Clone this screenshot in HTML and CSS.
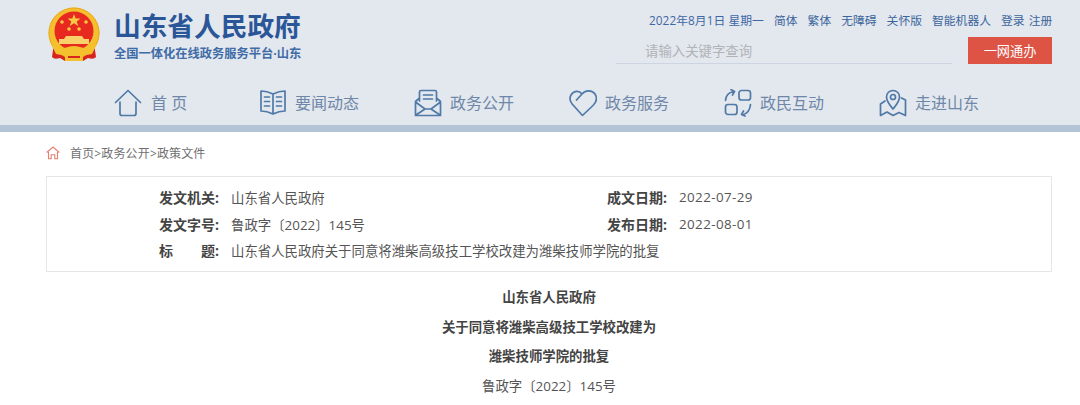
FILE: index.html
```html
<!DOCTYPE html>
<html lang="zh-CN">
<head>
<meta charset="utf-8">
<title>山东省人民政府</title>
<link rel="stylesheet" href="styles.css">
</head>
<body>
<header class="header">
  <div class="top">
    <div class="brand">
      <svg class="emblem" viewBox="0 0 52 56">
        <path d="M6 36 L4 50 Q6 53 12 51 L17 54 L35 54 L40 51 Q46 53 48 50 L46 36Z" fill="#d9231d"/>
        <circle cx="26" cy="26" r="25.500" fill="#f5c02e"/>
        <circle cx="26" cy="26" r="25" fill="none" stroke="#e8aa20" stroke-width="1"/>
        <circle cx="26" cy="24" r="19.500" fill="#e8291f"/>
        <polygon points="26,7 27.700,11.500 32.500,11.500 28.700,14.500 30.200,19 26,16.300 21.800,19 23.300,14.500 19.500,11.500 24.300,11.500" fill="#f6c945"/>
        <circle cx="14" cy="15" r="1.800" fill="#f6c945"/>
        <circle cx="38" cy="15" r="1.800" fill="#f6c945"/>
        <circle cx="21" cy="22" r="1.800" fill="#f6c945"/>
        <circle cx="31" cy="22" r="1.800" fill="#f6c945"/>
        <path d="M18 29 H34 L36 32 H16Z M11 32 H41 V37 H11Z" fill="#f8d16a"/>
        <path d="M3 37 Q12 43 20 40 Q26 38 32 40 Q40 43 49 37 L44 47 Q36 49 32 45 Q26 43 20 45 Q16 49 8 47Z" fill="#f5c02e"/>
        <path d="M17 47 H35 V54 H17Z" fill="#f5c02e"/>
        <path d="M20 49 H32 V51 H20Z" fill="#d9231d"/>
      </svg>
      <div class="brand-text">
        <div class="brand-title">山东省人民政府</div>
        <div class="brand-sub">全国一体化在线政务服务平台·山东</div>
      </div>
    </div>
    <div class="tools">
      <div class="links">
        <span class="date">2022年8月1日 星期一</span>
        <span>简体</span><span>繁体</span><span>无障碍</span><span>关怀版</span><span>智能机器人</span>
        <span class="auth">登录 注册</span>
      </div>
      <div class="search-row">
        <div class="search">请输入关键字查询</div>
        <div class="go">一网通办</div>
      </div>
    </div>
  </div>
  <nav class="nav">
    <a class="nav-item nav-first">
      <svg class="ico" viewBox="0 0 28 28"><path d="M1.500 13.500 L14 1.500 L26.500 13.500 M6 13 V24.500 Q6 26.500 8 26.500 H20 Q22 26.500 22 24.500 V13"/></svg>
      <span>首 页</span>
    </a>
    <a class="nav-item">
      <svg class="ico" viewBox="0 0 28 28"><path d="M14 5 Q8 2 2 2 V22 Q8 22 14 25 Q20 22 26 22 V2 Q20 2 14 5Z M14 5 V25 M5.500 8 H10.500 M5.500 12.500 H10.500 M5.500 17 H10.500 M17.500 8 H22.500 M17.500 12.500 H22.500 M17.500 17 H22.500"/></svg>
      <span>要闻动态</span>
    </a>
    <a class="nav-item">
      <svg class="ico" viewBox="0 0 28 28"><path d="M5.500 12 V3 Q5.500 1.500 7 1.500 H21 Q22.500 1.500 22.500 3 V12 M9.500 6 H18.500 M9.500 10 H18.500 M5.500 9 L1.500 12.500 V26.500 H26.500 V12.500 L22.500 9 M1.500 13 L11 20 H17 L26.500 13 M2 26 L11 20 M26 26 L17 20"/></svg>
      <span>政务公开</span>
    </a>
    <a class="nav-item">
      <svg class="ico" viewBox="0 0 28 28"><path d="M5 17 C1 13 0 9.500 2 6 C4.500 1.500 10 1 13 5 L7.500 11 M13 5 C16 1 23 0.500 26 5 C28.500 9 27 13.500 24 16.500 L14 26 Q13.500 26.500 13 26 L5 17"/></svg>
      <span>政务服务</span>
    </a>
    <a class="nav-item">
      <svg class="ico" viewBox="0 0 28 28"><rect x="15" y="1.500" width="11.500" height="9.500" rx="2.500"/><rect x="1.500" y="15.500" width="11.500" height="10" rx="2.500"/><path d="M1.500 11.500 Q2 4 9.500 2.500 M7 0.500 L10.500 2.500 L8.500 6 M26.500 15.500 Q26 23.500 18.500 26 M21 27 L17.500 25.500 L19.500 22"/></svg>
      <span>政民互动</span>
    </a>
    <a class="nav-item">
      <svg class="ico" viewBox="0 0 28 28"><path d="M14 20 C10 15 7.500 12.500 7.500 8 C7.500 4 10.500 1.500 14 1.500 C17.500 1.500 20.500 4 20.500 8 C20.500 12.500 18 15 14 20Z"/><circle cx="14" cy="8" r="2.500"/><path d="M6 12 L1.500 15 V26.500 L8 23 L14 26.500 L20 23.500 L26.500 26.500 V11 L22.500 9"/></svg>
      <span>走进山东</span>
    </a>
  </nav>
</header>
<div class="strip"></div>
<main class="main">
  <div class="crumbs">
    <svg class="crumb-ico" viewBox="0 0 14 14"><path d="M0.700 6.500 L7 1 L13.300 6.500 M2.500 6 V12.800 H5.200 V8.800 H8.800 V12.800 H11.500 V6"/></svg>
    <span>首页&gt;政务公开&gt;政策文件</span>
  </div>
  <section class="meta">
    <div class="meta-cell"><b class="key">发文机关:</b><span>山东省人民政府</span></div>
    <div class="meta-cell"><b class="key">成文日期:</b><span class="num">2022-07-29</span></div>
    <div class="meta-cell"><b class="key">发文字号:</b><span>鲁政字〔2022〕145号</span></div>
    <div class="meta-cell"><b class="key">发布日期:</b><span class="num">2022-08-01</span></div>
    <div class="meta-cell meta-full"><b class="key key-split"><i>标</i><i>题:</i></b><span>山东省人民政府关于同意将潍柴高级技工学校改建为潍柴技师学院的批复</span></div>
  </section>
  <article class="doc">
    <h1>山东省人民政府</h1>
    <h1>关于同意将潍柴高级技工学校改建为</h1>
    <h1>潍柴技师学院的批复</h1>
    <p>鲁政字〔2022〕145号</p>
  </article>
</main>
</body>
</html>
```
FILE: styles.css
```css
* { box-sizing: border-box; }
html, body { margin: 0; padding: 0; }
body {
  width: 1080px;
  height: 405px;
  overflow: hidden;
  background: #fff;
  font-family: "Open Sans", "Noto Sans CJK SC", sans-serif;
}
.header { height: 125px; background: #e3e7ee; }
.top { height: 75px; display: flex; justify-content: space-between; padding: 7px 28px 0 48px; }
.brand { display: flex; gap: 14px; }
.emblem { width: 52px; height: 56px; }
.brand-text { padding-top: 3px; }
.brand-title { font-size: 26.700px; line-height: 32px; font-weight: 700; color: #2a5698; white-space: nowrap; }
.brand-sub { margin-top: 5px; font-size: 12.250px; line-height: 14px; font-weight: 700; color: #3f6ca6; white-space: nowrap; }
.tools { width: 436px; }
.links { display: flex; align-items: center; height: 24px; padding-left: 33px; font-size: 11.800px; color: #3b659c; white-space: nowrap; }
.links span { margin-right: 10px; }
.links .date { color: #3f67a4; letter-spacing: 0.050px; }
.links .auth { margin-right: 0; word-spacing: 1px; }
.search-row { display: flex; gap: 16px; margin-top: 6px; }
.search { width: 336px; height: 27px; padding: 5px 0 0 29px; border-bottom: 1px solid #cdd5e2; font-size: 13.400px; line-height: 18px; color: #b1b3b8; }
.go { width: 84px; height: 27px; background: #dd5445; color: #fff; font-size: 13.200px; line-height: 28px; text-align: center; }
.nav { display: flex; padding-left: 114px; height: 50px; }
.nav-item { width: 155px; display: flex; align-items: center; gap: 8px; height: 30px; margin-top: 13px; font-size: 16px; color: #6f87a8; white-space: nowrap; }
.nav-first { width: 145px; gap: 9px; }
.nav-item span { padding-bottom: 2px; }
.ico { width: 28px; height: 28px; flex: none; fill: none; stroke: #4f7aa8; stroke-width: 1.700; stroke-linecap: round; stroke-linejoin: round; }
.strip { height: 7px; background: #b3c4d7; }
.main { padding: 0 28px 0 46px; }
.crumbs { display: flex; align-items: center; gap: 10px; height: 44px; padding-bottom: 2px; font-size: 12px; letter-spacing: 0.150px; color: #707070; }
.crumb-ico { width: 14px; height: 14px; fill: none; stroke: #e2806f; stroke-width: 1.100; }
.meta { display: grid; grid-template-columns: 448px 1fr; grid-auto-rows: 26.400px; width: 1006px; height: 96px; padding: 7px 0 0 112px; border: 1px solid #e6e6e6; font-size: 13.400px; color: #555; }
.meta-cell { display: flex; align-items: center; white-space: nowrap; }
.meta-full { grid-column: 1 / 3; }
.num { letter-spacing: 0.400px; }
.key { width: 72px; flex: none; color: #444; font-weight: 700; font-size: 14px; }
.key-split { display: flex; justify-content: space-between; width: 60px; margin-right: 12px; }
.key-split i { font-style: normal; }
.doc { width: 1006px; padding-top: 11px; text-align: center; color: #444; }
.doc h1 { margin: 0; font-size: 13.400px; line-height: 29.500px; font-weight: 700; }
.doc p { margin: 0; font-size: 13.400px; line-height: 29.500px; color: #555; }
```
